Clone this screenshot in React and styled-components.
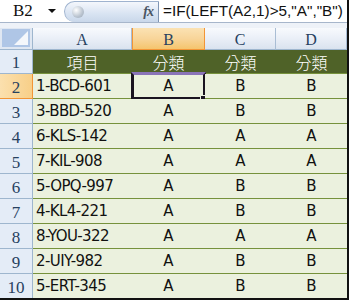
import React from 'react';
import styled, { createGlobalStyle } from 'styled-components';

const rows = [
  { id: 2, item: '1-BCD-601', b: 'A', c: 'B', d: 'B' },
  { id: 3, item: '3-BBD-520', b: 'A', c: 'B', d: 'B' },
  { id: 4, item: '6-KLS-142', b: 'A', c: 'A', d: 'A' },
  { id: 5, item: '7-KIL-908', b: 'A', c: 'A', d: 'A' },
  { id: 6, item: '5-OPQ-997', b: 'A', c: 'B', d: 'B' },
  { id: 7, item: '4-KL4-221', b: 'A', c: 'B', d: 'B' },
  { id: 8, item: '8-YOU-322', b: 'A', c: 'A', d: 'A' },
  { id: 9, item: '2-UIY-982', b: 'A', c: 'B', d: 'B' },
  { id: 10, item: '5-ERT-345', b: 'A', c: 'B', d: 'B' },
];

const GlobalStyle = createGlobalStyle`
  body {
    margin: 0;
    background: #ffffff;
  }
`;

function App() {
  return (
    <>
      <GlobalStyle />
      <Frame>
        <FormulaBar>
          <NameBox>B2</NameBox>
          <DropArrow />
          <FxPill>
            <PillKnob />
            <FxLabel>fx</FxLabel>
          </FxPill>
          <Formula>=IF(LEFT(A2,1)&gt;5,"A","B")</Formula>
        </FormulaBar>
        <Gap />
        <Sheet>
          <Corner>
            <CornerTriangle />
          </Corner>
          <ColHead>A</ColHead>
          <ColHead $active>B</ColHead>
          <ColHead>C</ColHead>
          <ColHead>D</ColHead>

          <RowHead>1</RowHead>
          <TitleCell>項目</TitleCell>
          <TitleCell>分類</TitleCell>
          <TitleCell>分類</TitleCell>
          <TitleCell>分類</TitleCell>

          {rows.map((r) => (
            <React.Fragment key={r.id}>
              <RowHead $active={r.id === 2}>{r.id}</RowHead>
              <ItemCell>{r.item}</ItemCell>
              <ValueCell>
                {r.b}
                {r.id === 2 && (
                  <Selection>
                    <FillHandle />
                  </Selection>
                )}
              </ValueCell>
              <ValueCell>{r.c}</ValueCell>
              <ValueCell>{r.d}</ValueCell>
            </React.Fragment>
          ))}
        </Sheet>
      </Frame>
    </>
  );
}

const Frame = styled.div`
  width: 349px;
  height: 300px;
  box-sizing: border-box;
  border-right: 2px solid #111;
  border-bottom: 2px solid #111;
  overflow: hidden;
  background: #ffffff;
`;

const FormulaBar = styled.div`
  height: 23px;
  box-sizing: border-box;
  display: flex;
  align-items: center;
  border-bottom: 1px solid #a7b6cb;
  background: #ffffff;
  overflow: hidden;
  & > * {
    flex-shrink: 0;
  }
`;

const NameBox = styled.div`
  width: 40px;
  box-sizing: border-box;
  padding-left: 13px;
  font-family: 'Liberation Serif', serif;
  font-size: 17px;
  color: #111;
`;

const DropArrow = styled.div`
  width: 0;
  height: 0;
  margin-left: 8px;
  border-left: 4px solid transparent;
  border-right: 4px solid transparent;
  border-top: 4px solid #111;
`;

const FxPill = styled.div`
  margin-left: 8px;
  width: 95px;
  height: 21px;
  box-sizing: border-box;
  align-self: flex-end;
  display: flex;
  align-items: center;
  justify-content: space-between;
  border: 1px solid #9fb3cf;
  border-right: 1px solid #7f95b3;
  border-bottom: none;
  border-radius: 11px 0 0 11px;
  background: linear-gradient(#f4f7fc, #d8e3f2 60%, #c9d7ea);
  padding: 0 5px 0 7px;
`;

const PillKnob = styled.div`
  width: 12px;
  height: 12px;
  border-radius: 50%;
  background: radial-gradient(circle at 35% 35%, #ffffff, #b9c3cf 60%, #9aa6b4);
`;

const FxLabel = styled.span`
  font-family: 'Liberation Serif', serif;
  font-style: italic;
  font-weight: bold;
  font-size: 14px;
  color: #4a5563;
  letter-spacing: -1px;
`;

const Formula = styled.div`
  margin-left: 4px;
  font-family: 'Liberation Sans', sans-serif;
  font-size: 15.3px;
  color: #111;
  white-space: nowrap;
`;

const Gap = styled.div`
  height: 5px;
  background: #eef2f8;
`;

const Sheet = styled.div`
  display: grid;
  grid-template-columns: 33px 99px 73px 71px 71px;
  grid-template-rows: 22px 24px repeat(9, 25px);
`;

const Corner = styled.div`
  box-sizing: border-box;
  background: #dfe7f2;
  border-right: 1px solid #9eb6ce;
  border-bottom: 1px solid #9eb6ce;
  padding: 1px 2px 2px 2px;
  display: flex;
`;

const CornerTriangle = styled.div`
  flex: 1;
  background: #afc6e6;
  position: relative;
  &::after {
    content: '';
    position: absolute;
    right: 2px;
    bottom: 2px;
    width: 0;
    height: 0;
    border-left: 14px solid transparent;
    border-bottom: 14px solid #f4f7fb;
  }
`;

const ColHead = styled.div`
  box-sizing: border-box;
  display: flex;
  align-items: center;
  justify-content: center;
  font-family: 'Liberation Serif', serif;
  font-size: 16px;
  color: #27415f;
  background: ${(p) =>
    p.$active
      ? 'linear-gradient(#fbe2b3, #f8d59a 50%, #f5c56d)'
      : 'linear-gradient(#f8fafd, #eaeff7 50%, #dae3ef)'};
  border-right: 1px solid ${(p) => (p.$active ? '#f29536' : '#a9bdd4')};
  border-bottom: 1px solid ${(p) => (p.$active ? '#f29536' : '#9eb6ce')};
  border-left: ${(p) => (p.$active ? '1px solid #f29536' : 'none')};
  padding-top: 2px;
`;

const RowHead = styled.div`
  box-sizing: border-box;
  display: flex;
  align-items: center;
  justify-content: center;
  font-family: 'Liberation Serif', serif;
  font-size: 17px;
  color: #27415f;
  padding-top: 3px;
  background: ${(p) =>
    p.$active ? 'linear-gradient(90deg, #fbe0ae, #f8cf88)' : '#e4ecf7'};
  border-right: 1px solid ${(p) => (p.$active ? '#f29536' : '#9eb6ce')};
  border-bottom: 1px solid ${(p) => (p.$active ? '#f29536' : '#9eb6ce')};
`;

const TitleCell = styled.div`
  box-sizing: border-box;
  display: flex;
  align-items: center;
  justify-content: center;
  background: #4f6228;
  color: #ffffff;
  font-family: 'Noto Sans CJK TC', 'Noto Sans CJK SC', sans-serif;
  font-size: 16px;
  font-weight: 300;
  border-bottom: 1px solid #76923c;
`;

const DataCell = styled.div`
  box-sizing: border-box;
  display: flex;
  align-items: center;
  background: #ebf1de;
  border-bottom: 1px solid #76923c;
  font-family: 'DejaVu Sans', 'Liberation Sans', sans-serif;
  font-size: 15px;
  color: #111;
  position: relative;
`;

const ItemCell = styled(DataCell)`
  padding-left: 3px;
  letter-spacing: -0.6px;
`;

const ValueCell = styled(DataCell)`
  justify-content: center;
`;

const Selection = styled.div`
  position: absolute;
  left: -1px;
  top: -2px;
  right: -1px;
  bottom: -2px;
  border: 3px solid #1a1420;
  border-top-color: #8a74b8;
  pointer-events: none;
`;

const FillHandle = styled.div`
  position: absolute;
  right: -5px;
  bottom: -5px;
  width: 6px;
  height: 5px;
  background: #1a1420;
  border: 1px solid #ebf1de;
`;

export default App;
